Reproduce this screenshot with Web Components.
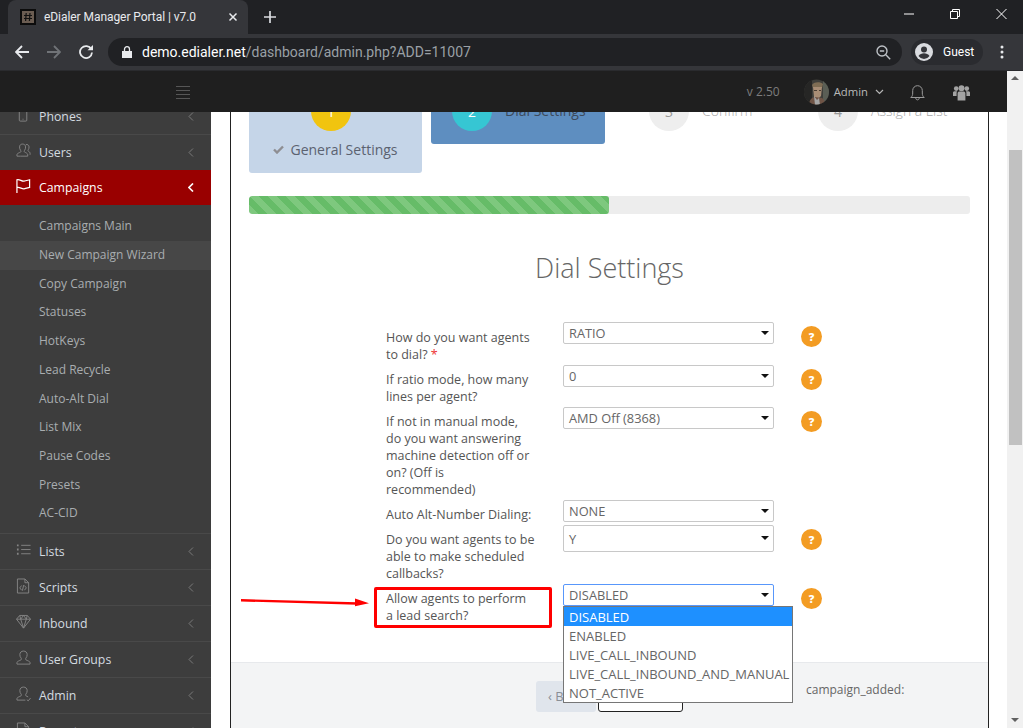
<!DOCTYPE html>
<html lang="en"><head><meta charset="utf-8"><title>eDialer Manager Portal | v7.0</title>
<style>
html,body{margin:0;height:100%;overflow:hidden;background:#fff;font-family:"Open Sans",sans-serif}
body{display:flex;flex-direction:column;width:1023px;height:728px}
</style></head><body>
<browser-chrome></browser-chrome>
<app-viewport>
  <app-navbar></app-navbar>
  <side-nav>
    <nav-item icon="phone" label="Phones"></nav-item>
    <nav-item icon="users" label="Users" flush></nav-item>
    <nav-item icon="flag" label="Campaigns" active></nav-item>
    <sub-list>
      <sub-item>Campaigns Main</sub-item>
      <sub-item current>New Campaign Wizard</sub-item>
      <sub-item>Copy Campaign</sub-item>
      <sub-item>Statuses</sub-item>
      <sub-item>HotKeys</sub-item>
      <sub-item>Lead Recycle</sub-item>
      <sub-item>Auto-Alt Dial</sub-item>
      <sub-item>List Mix</sub-item>
      <sub-item>Pause Codes</sub-item>
      <sub-item>Presets</sub-item>
      <sub-item>AC-CID</sub-item>
    </sub-list>
    <nav-item icon="list" label="Lists"></nav-item>
    <nav-item icon="code" label="Scripts"></nav-item>
    <nav-item icon="diamond" label="Inbound"></nav-item>
    <nav-item icon="user" label="User Groups"></nav-item>
    <nav-item icon="userok" label="Admin"></nav-item>
    <nav-item icon="code" label="Reports"></nav-item>
  </side-nav>
  <wizard-panel>
    <step-bar>
      <wizard-step num="1" label="General Settings" kind="done"></wizard-step>
      <wizard-step num="2" label="Dial Settings" kind="current"></wizard-step>
      <wizard-step num="3" label="Confirm" kind="todo" style="margin-left:35px"></wizard-step>
      <wizard-step num="4" label="Assign a List" kind="todo"></wizard-step>
    </step-bar>
    <striped-progress></striped-progress>
    <dial-form>
      <form-row value="RATIO" help style="--pad:7px">How do you want agents to dial? <span style="color:#e33">*</span></form-row>
      <form-row value="0" help>If ratio mode, how many lines per agent?</form-row>
      <form-row value="AMD Off (8368)" help>If not in manual mode, do you want answering machine detection off or on? (Off is recommended)</form-row>
      <form-row value="NONE">Auto Alt-Number Dialing:</form-row>
      <form-row value="Y" help tall>Do you want agents to be able to make scheduled callbacks?</form-row>
      <form-row value="DISABLED" help open annotated>Allow agents to perform a lead search?</form-row>
    </dial-form>
    <wizard-footer></wizard-footer>
  </wizard-panel>
  <page-scrollbar></page-scrollbar>
</app-viewport>
<script>
const ICONS={
phone:'<rect x="3.5" y="0.5" width="8" height="14" rx="1"/><path d="M7 12.5h1"/>',
users:'<path d="M5 13.5H1v-1.6c0-1.3 2.6-2.1 3.8-2.7.6-.4.6-1.3 0-2C4 6.200 3.800 5 3.800 3.600 3.800 1.700 5.200.6 7 .6s3.200 1.100 3.200 3c0 1.400-.2 2.600-1 3.600-.6.700-.6 1.600 0 2 1.200.6 3.300 1.400 3.300 2.700v1.600z"/><path d="M10.500 1.200c1.700-.6 3.400.6 3.400 2.400 0 1.200-.2 2.100-.8 3-.5.700-.4 1.300.1 1.700 .8.500 1.800 1 1.800 2.100V12"/>',
flag:'<path d="M1 15.500V.8M1 1.300c2.800-1 5 2 7.500 1.500 2.200-.3 4-1 6-1.500V9.500c-2 .5-3.800 1.200-6 1.500-2.500.3-4.700-2.300-7.500-1.300" stroke-width="1.300"/>',
list:'<path d="M5.500 3h10M5.500 7.500h10M5.500 12h10"/><path d="M1 3h1.800M1 7.500h1.800M1 12h1.800" stroke-width="2"/>',
code:'<path d="M1.500.5h8l4 4v11h-12zM9.500.5v4h4"/><path d="M6 7.500 4 10l2 2.500M9 7.500l2 2.500-2 2.500M8.200 7l-1.400 6"/>',
diamond:'<path d="M4 1h8l3.500 4L8 14.500.5 5zM.5 5h15M5 5l3 9.500L11 5 8 1zM4 1l1 4M12 1l-1 4"/>',
user:'<path d="M1 14.500v-1.600c0-1.300 3-2.100 4.300-2.900.7-.5.6-1.300 0-2.100C4.500 7 4.100 5.800 4.100 4.300 4.100 2 5.800.6 8 .6s3.900 1.400 3.900 3.700c0 1.500-.4 2.700-1.200 3.600-.6.800-.7 1.600 0 2.100 1.300.8 4.300 1.600 4.300 2.900v1.600z"/>',
userok:'<path d="M10 14.500H1v-1.600c0-1.300 3-2.100 4.300-2.900.7-.5.6-1.300 0-2.100C4.500 7 4.100 5.800 4.100 4.300 4.100 2 5.800.6 8 .6s3.900 1.400 3.900 3.700c0 1.500-.4 2.700-1.200 3.600-.6.800-.7 1.600 0 2.100 .7.400 1.500.8 2.300 1.100"/><path d="M11.500 14l1.500 1.300 2.500-3"/>'
};
function def(name,html,init){customElements.define(name,class extends HTMLElement{
  connectedCallback(){ if(this.shadowRoot) return; const r=this.attachShadow({mode:'open'}); r.innerHTML=typeof html==='function'?html(this):html; if(init) init(this,r);} });}

def('browser-chrome',`<style>
:host{display:block;flex:none;height:71px;background:#202124;color:#fff;font-family:Roboto,sans-serif}
svg{display:block;flex:none}
.strip{height:34px;display:flex;align-items:flex-end;padding-left:8px;box-sizing:border-box}
.tab{width:240px;height:34px;background:#35363a;border-radius:8px 8px 0 0;display:flex;align-items:center;padding:0 9px 0 12px;box-sizing:border-box;gap:8px;font-size:12px;color:#e8eaed}
.title{flex:1;white-space:nowrap;letter-spacing:-.06px}
.plus{margin:0 0 10px 15px}
.win{margin-left:auto;display:flex;align-self:flex-start;padding-top:8px;padding-right:16px}
.bar{height:36px;background:#35363a;display:flex;align-items:center;padding:0 0 0 15px;box-sizing:border-box}
.nav{display:flex;gap:18px;margin-right:15px}
.omni{width:794px;height:28px;background:#202124;border-radius:14px;display:flex;align-items:center;padding:0 11px 0 14px;box-sizing:border-box;font:14px Roboto,sans-serif;letter-spacing:0}
.omni b{font-weight:400;color:#fff}.omni span{color:#9aa0a6}.url{flex:1;margin-left:10px;white-space:nowrap}
.guest{margin-left:9px;width:72px;height:26px;background:#2a2b2f;border-radius:13px;display:flex;align-items:center;padding-left:4px;box-sizing:border-box;gap:10px;font-size:12px;color:#fff}
.dots{margin-left:17px}
.line{height:1px;background:#2a2b2e}
</style>
<div class="strip">
 <div class="tab">
  <svg width="16" height="16" viewBox="0 0 16 16"><rect width="16" height="16" fill="#0c0c0c"/><rect x="2" y="2" width="12" height="12" fill="#6b5d52"/><path d="M6.200 4l-.6 8M10 4l-.6 8M4 6.500h8M4 9.500h8" stroke="#111" stroke-width="1.200"/></svg>
  <span class="title">eDialer Manager Portal | v7.0</span>
  <svg width="12" height="12" viewBox="0 0 12 12"><path d="M2.500 2.500l7 7M9.500 2.500l-7 7" stroke="#e8eaed" stroke-width="1.500"/></svg>
 </div>
 <svg class="plus" width="14" height="14" viewBox="0 0 14 14"><path d="M7 1v12M1 7h12" stroke="#dadce0" stroke-width="1.700"/></svg>
 <div class="win">
  <svg width="10" height="12" viewBox="0 0 10 12"><path d="M0 6h10" stroke="#fff"/></svg>
  <svg style="margin-left:36px" width="10" height="12" viewBox="0 0 10 12"><path d="M.5 3.500h7v7h-7zM2.500 3.500v-2h7v7h-2" fill="none" stroke="#fff"/></svg>
  <svg style="margin-left:36px" width="11" height="12" viewBox="0 0 11 12"><path d="M.5 1l10 10M10.500 1L.5 11" stroke="#fff"/></svg>
 </div>
</div>
<div class="bar">
 <div class="nav">
  <svg width="14" height="14" viewBox="0 0 14 14"><path d="M14 7H1.500M7 1L1 7l6 6" fill="none" stroke="#e8eaed" stroke-width="1.800"/></svg>
  <svg width="14" height="14" viewBox="0 0 14 14"><path d="M0 7h12.500M7 1l6 6-6 6" fill="none" stroke="#707377" stroke-width="1.800"/></svg>
  <svg width="14" height="14" viewBox="0 0 14 14"><path d="M12.300 4.200A6 6 0 1 0 13 7.500" fill="none" stroke="#e8eaed" stroke-width="1.800"/><path d="M8.500 5.200H14V0z" fill="#e8eaed"/></svg>
 </div>
 <div class="omni">
  <svg width="10" height="12" viewBox="0 0 10 12"><path d="M0 5h10v7H0z" fill="#e8eaed"/><path d="M2.500 5V3.200a2.500 2.500 0 0 1 5 0V5" fill="none" stroke="#e8eaed" stroke-width="1.300"/></svg>
  <div class="url"><b>demo.edialer.net</b><span>/dashboard/admin.php?ADD=11007</span></div>
  <svg width="15" height="15" viewBox="0 0 15 15"><circle cx="6" cy="6" r="5" fill="none" stroke="#bdc1c6" stroke-width="1.400"/><path d="M3.800 6h4.400M9.800 9.800l4.400 4.400" stroke="#bdc1c6" stroke-width="1.400"/></svg>
 </div>
 <div class="guest">
  <svg width="18" height="18" viewBox="0 0 18 18"><circle cx="9" cy="9" r="9" fill="#dadce0"/><circle cx="9" cy="6.500" r="3" fill="#35363a"/><path d="M3.500 13c1-2 3.500-2.800 5.500-2.800s4.500.8 5.500 2.800A7 7 0 0 1 9 16a7 7 0 0 1-5.500-3z" fill="#35363a"/></svg>
  <span>Guest</span>
 </div>
 <svg class="dots" width="4" height="14" viewBox="0 0 4 14"><circle cx="2" cy="2" r="1.500" fill="#e8eaed"/><circle cx="2" cy="7" r="1.500" fill="#e8eaed"/><circle cx="2" cy="12" r="1.500" fill="#e8eaed"/></svg>
</div>
<div class="line"></div>`);

def('app-viewport',`<style>
:host{display:flex;flex:1;min-height:0;position:relative;overflow:hidden;background:#fff;align-items:flex-start}
</style><slot></slot>`);

def('app-navbar',`<style>
:host{position:absolute;left:0;top:0;right:16px;height:41px;background:#1f1f1f;z-index:5;display:flex;align-items:center;font-size:12px;color:#7d7d7d;box-sizing:border-box;padding:0 37px 0 176px}
svg{display:block;flex:none}
.ver{margin-left:auto}
.ava{margin-left:24px}
.name{margin-left:5px;color:#b9b9b9;font-size:11.3px}
.chev{margin-left:7px}
.bell{margin-left:26px}
.grp{margin-left:28px}
</style>
<svg width="14" height="13" viewBox="0 0 14 13" style="margin-top:2px"><path d="M0 .5h14M0 4.500h14M0 8.500h14M0 12.500h14" stroke="#565656"/></svg>
<span class="ver">v 2.50</span>
<svg class="ava" width="25" height="26" viewBox="0 0 25 26"><defs><clipPath id="c"><circle cx="12.500" cy="13" r="12.500"/></clipPath></defs><g clip-path="url(#c)"><rect width="25" height="26" fill="#3f3f3b"/><rect width="8" height="26" fill="#262625"/><rect x="19" width="6" height="26" fill="#5a5e55"/><path d="M8 6c1-3 8-4 11-1l-1 4H9z" fill="#7f6d54"/><path d="M9 8h9l-1 9-3 3-4-2z" fill="#a88d75"/><path d="M10 11h3v1h-3zM15 11h2v1h-2z" fill="#4a3d32"/><path d="M5 26c0-5 3-8 6-8l7 1c2 1 3 3 3 7z" fill="#6f5446"/><path d="M10 17l3 4 2-2 1 7h-5z" fill="#a5a5a5"/></g></svg>
<span class="name">Admin</span>
<svg class="chev" width="9" height="6" viewBox="0 0 9 6"><path d="M1 1l3.500 3.500L8 1" fill="none" stroke="#b5b5b5" stroke-width="1.200"/></svg>
<svg class="bell" width="15" height="17" viewBox="0 0 15 17" style="margin-top:2px"><path d="M.8 13.500c1.500-1.200 1.900-2.500 1.900-4.500V6.500a4.800 4.800 0 0 1 9.600 0V9c0 2 .4 3.300 1.900 4.500zM5.800 14c0 2.500 3.400 2.500 3.400 0" fill="none" stroke="#9b9b9b"/></svg>
<svg class="grp" width="17" height="16" viewBox="0 0 17 16" style="margin-top:3px" fill="#a3a3a3"><circle cx="3.200" cy="3.600" r="2.300"/><circle cx="13.800" cy="3.600" r="2.300"/><circle cx="8.500" cy="3.200" r="3"/><path d="M0 11V7.500C0 6.700 1 6.300 2.500 6.300h1.700c-.3.500-.6 1-.6 1.700V11zM17 11V7.500c0-.8-1-1.200-2.500-1.200h-1.700c.3.500.6 1 .6 1.700V11zM4.600 15.500V8.200c0-1 1-1.600 2-1.600h3.800c1 0 2 .6 2 1.600v7.300z"/></svg>`);

def('side-nav',`<style>
:host{display:block;flex:none;width:211px;height:700px;background:#3d3d3d;padding-top:28px;box-sizing:content-box;font-size:13px}
</style><slot></slot>`);

def('nav-item',h=>{
 const a=h.hasAttribute('active'),f=h.hasAttribute('flush');
 return `<style>
:host{display:flex;align-items:center;height:${a||f?35:36}px;box-sizing:border-box;${a||f?'':'border-bottom:1px solid #494949;'}padding:0 17px 0 16px;font-size:12.3px;color:${a?'#fff':'#d4dbe0'};background:${a?'#990000':'transparent'}}
svg{flex:none;display:block}
.t{flex:1;margin-left:8px;white-space:nowrap}
</style>
<svg width="15" height="16" viewBox="0 0 16 16" fill="none" stroke="${a?'#fff':'#858585'}" stroke-width="1" style="margin-top:-3px">${ICONS[h.getAttribute('icon')]}</svg>
<span class="t">${h.getAttribute('label')}</span>
<svg width="6" height="9" viewBox="0 0 6 9"><path d="M5 .5l-4 4 4 4" fill="none" stroke="${a?'#fff':'#7b7b7b'}" stroke-width="${a?1.6:1}"/></svg>`});

def('sub-list',`<style>:host{display:block;padding:7.4px 0 4.900px;border-bottom:1px solid #494949}</style><slot></slot>`);
def('sub-item',h=>`<style>
:host{display:block;height:28.7px;line-height:28.7px;padding-left:39px;font-size:12px;color:#a9adb0;white-space:nowrap;${h.hasAttribute('current')?'background:#474747;':''}}
</style><slot></slot>`);

def('wizard-panel',`<style>
:host{display:block;flex:none;width:759px;height:700px;margin-left:19px;margin-right:18px;border-left:1px solid #222;border-right:1px solid #222;box-sizing:border-box;background:#fff;overflow:hidden;position:relative}
</style><slot></slot>`);

def('step-bar',`<style>:host{display:flex;gap:9px;padding:0 18px;align-items:flex-start}</style><slot></slot>`);

def('wizard-step',h=>{
 const k=h.getAttribute('kind'),n=h.getAttribute('num'),l=h.getAttribute('label');
 const circle={done:'#f1c40f',current:'#36c6d3',todo:'#eeeeee'}[k];
 const base=`.c{width:40px;height:40px;border-radius:50%;background:${circle};color:${k==='todo'?'#999':'#fff'};display:flex;align-items:center;justify-content:center;font-size:14px;flex:none}`;
 if(k==='done') return `<style>
:host{display:block;flex:none;width:173px;height:102px;background:#c5d5e8;border-radius:0 0 3px 3px;box-sizing:border-box;padding-top:20px}
${base}.c{margin-left:62px}
.t{display:flex;align-items:center;justify-content:center;gap:6px;height:20px;margin-top:8px;font-size:14px;color:#5b6270;white-space:nowrap}
</style><div class="c">${n}</div><div class="t"><svg width="11" height="9" viewBox="0 0 11 9"><path d="M1 4.500l3 3 6-6" fill="none" stroke="#8e8e92" stroke-width="2.400"/></svg>${l}</div>`;
 return `<style>
:host{display:flex;flex:none;align-items:flex-start;box-sizing:border-box;padding:20px 0 13px 21px;${k==='current'?'width:174px;height:73px;background:#5e8ec0;border-radius:0 0 3px 3px;':'width:160px;padding-left:0;'}}
${base}
.t{margin-left:13px;line-height:20px;margin-top:10px;font-size:14px;color:${k==='current'?'#3d4a5c':'#a9a9a9'};white-space:nowrap;font-weight:${k==='current'?400:300}}
</style><div class="c">${n}</div><div class="t">${l}</div>`;
});

def('striped-progress',`<style>
:host{display:block;margin:23px 18px 0;height:18px;background:#ededed;border-radius:3px;overflow:hidden}
div{width:360px;height:18px;border-radius:3px;background-color:#66bc68;background-image:linear-gradient(45deg,#7ec87e 25%,transparent 25%,transparent 50%,#7ec87e 50%,#7ec87e 75%,transparent 75%);background-size:18px 18px}
</style><div></div>`);

def('dial-form',`<style>
:host{display:block}
h2{margin:36px 0 0;height:36px;line-height:36px;text-align:center;font-weight:300;font-size:27px;color:#666}
.g{display:grid;grid-template-rows:43px 42px 93px 25px 59px 78px;padding:36px 0 0 155px}
</style><h2>Dial Settings</h2><div class="g"><slot></slot></div>`);

def('form-row',h=>{
 const tall=h.hasAttribute('tall'),open=h.hasAttribute('open'),ann=h.hasAttribute('annotated'),v=h.getAttribute('value');
 return `<style>
:host{display:grid;grid-template-columns:177px 211px auto;align-items:start}
.l{width:149.5px;font-size:12.5px;line-height:17px;color:#555;padding-top:var(--pad,6px);position:relative}
.s{position:relative;box-sizing:border-box;height:${tall?27:22}px;border:1px solid ${open?'#5897fb':'#c8c8c8'};border-radius:2px;padding:${tall?2:0}px 0 0 5px;line-height:${tall?23:20}px;font-size:12.8px;color:#666;background:#fff;display:flex;align-items:flex-start}
.a{position:absolute;right:4px;top:${tall?10:8}px;width:0;height:0;border:4px solid transparent;border-top:4px solid #111;border-bottom:0}
.h{margin:4px 0 0 27px;width:21px;height:21px;border-radius:50%;background:#f39c23;color:#fff;font-size:11px;font-weight:800;display:flex;align-items:center;justify-content:center}
.m{position:absolute;left:-1px;top:21px;width:230px;box-sizing:border-box;border:1px solid #767676;background:#fff;z-index:3;font-size:13px;color:#666;line-height:20px}
.m div{height:19px;padding-left:5px;white-space:nowrap}.m .on{background:#1e90ff;color:#fff}
.box{position:absolute;left:-12px;top:3px;width:178px;height:41px;box-sizing:border-box;border:3px solid #f00;border-radius:2px}
.arr{position:absolute;left:-145px;top:12px}
</style>
<div class="l"><slot></slot>${ann?`<div class="box"></div><svg class="arr" width="130" height="14" viewBox="0 0 130 14"><path d="M0 4.300l116 3.200" stroke="#f00" stroke-width="2.400" fill="none"/><path d="M114 2.500l14 4.800-14 3z" fill="#f00"/></svg>`:''}</div>
<div class="s">${v}<i class="a"></i>${open?`<div class="m"><div class="on">DISABLED</div><div>ENABLED</div><div>LIVE_CALL_INBOUND</div><div>LIVE_CALL_INBOUND_AND_MANUAL</div><div>NOT_ACTIVE</div></div>`:''}</div>
${h.hasAttribute('help')?'<div class="h">?</div>':''}`});

def('wizard-footer',`<style>
:host{display:flex;align-items:flex-start;background:#f3f4f5;border-top:1px solid #e7e9ec;height:70px;padding:18px 0 0 305px;box-sizing:border-box;font-size:12px;color:#666}
.b{height:31px;box-sizing:border-box;line-height:31px;flex:none;text-align:center;font-size:13px}
.back{width:60px;background:#e0e5ec;border-radius:3px;color:#8a8f96;margin-right:2px}
.next{width:85px;background:#fff;border:1px solid #222;border-radius:3px;color:#333;line-height:29px}
.st{margin-left:123px;line-height:17px}
</style><div class="b back">‹ Back</div><div class="b next">Next ›</div><div class="st">campaign_added:</div>`);

def('page-scrollbar',`<style>
:host{position:absolute;right:0;top:0;width:16px;height:657px;background:#f1f1f1;z-index:6}
.u,.d{position:absolute;left:4px;width:0;height:0;border:4px solid transparent}
.u{top:5px;border-bottom:4px solid #606060;border-top:0}
.d{bottom:6px;border-top:4px solid #606060;border-bottom:0}
.t{position:absolute;left:2px;top:79px;width:13px;height:295px;background:#c1c1c1}
</style><i class="u"></i><div class="t"></div><i class="d"></i>`);
</script>
</body></html>
